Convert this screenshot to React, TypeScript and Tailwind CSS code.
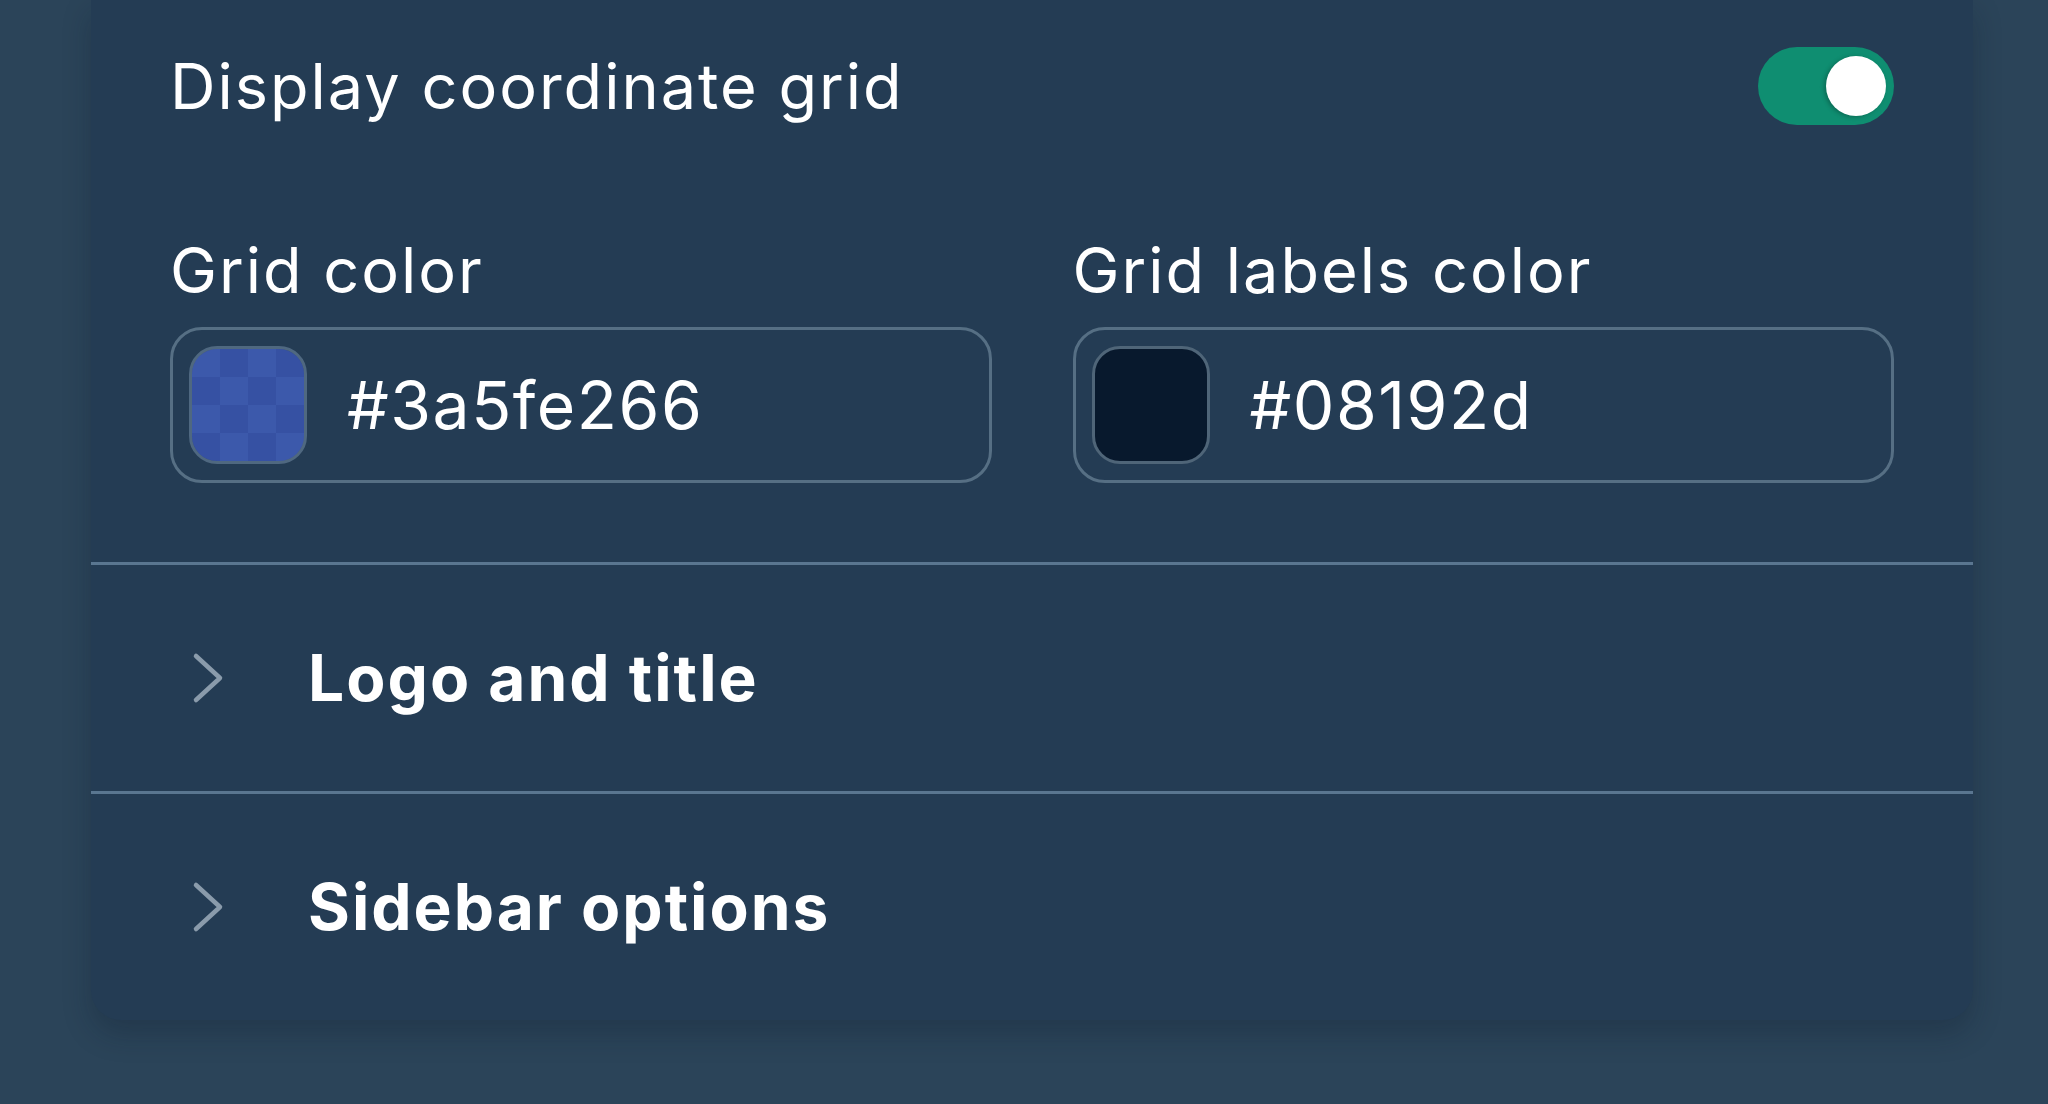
import React from 'react';

const font = { fontFamily: 'Inter, "Noto Sans", sans-serif' };

function Toggle() {
  return (
    <div className="flex h-[78px] w-[136px] items-center justify-end rounded-full bg-[#0f8e71] pr-[8px]">
      <div className="h-[60px] w-[60px] rounded-full bg-white shadow-[-2px_1px_4px_rgba(0,0,0,0.25)]" />
    </div>
  );
}

function ColorField({ label, value, swatch }: { label: string; value: string; swatch: React.ReactNode }) {
  return (
    <div className="flex flex-col">
      <div className="text-[63px] leading-[72px] tracking-[2px] text-white">{label}</div>
      <div className="mt-[21px] flex h-[156px] items-center rounded-[32px] border-[3px] border-[#566f84] pl-[16px]">
        {swatch}
        <span className="ml-[40px] text-[66px] leading-none tracking-[1.5px] text-white">{value}</span>
      </div>
    </div>
  );
}

function Chevron() {
  return (
    <svg width="34" height="54" viewBox="0 0 34 54" fill="none">
      <polyline
        points="5,5 29,27 5,49"
        stroke="#8a9bab"
        strokeWidth="4.5"
        strokeLinecap="round"
        strokeLinejoin="round"
      />
    </svg>
  );
}

function AccordionRow({ title }: { title: string }) {
  return (
    <div className="border-t-[3px] border-[#5a7690]">
      <button className="flex h-[226px] w-full items-center pl-[100px] text-left">
        <Chevron />
        <span className="ml-[83px] text-[64px] font-bold leading-none tracking-[2px] text-white">{title}</span>
      </button>
    </div>
  );
}

export default function App() {
  return (
    <div className="h-[1104px] w-full overflow-hidden bg-[#2b4459] pl-[91px]" style={font}>
      <div className="w-[1882px] rounded-b-[30px] bg-[#243c54] shadow-[0_14px_28px_rgba(10,25,40,0.25)]">
        <div className="px-[79px] pt-[47px] pb-[79px]">
          <div className="flex h-[78px] items-center justify-between">
            <span className="text-[63px] leading-none tracking-[2px] text-white">Display coordinate grid</span>
            <Toggle />
          </div>
          <div className="mt-[109px] grid grid-cols-2 gap-[81px]">
            <ColorField
              label="Grid color"
              value="#3a5fe266"
              swatch={
                <div className="h-[118px] w-[118px] shrink-0 overflow-hidden rounded-[28px] border-[3px] border-[#4f6880] bg-[conic-gradient(#34497a_25%,#3f5588_0_50%,#34497a_0_75%,#3f5588_0)] bg-[length:56px_56px]">
                  <div className="h-full w-full bg-[#3a5fe2]/40" />
                </div>
              }
            />
            <ColorField
              label="Grid labels color"
              value="#08192d"
              swatch={
                <div className="h-[118px] w-[118px] shrink-0 rounded-[28px] border-[3px] border-[#4f6578] bg-[#08192d]" />
              }
            />
          </div>
        </div>
        <AccordionRow title="Logo and title" />
        <AccordionRow title="Sidebar options" />
      </div>
    </div>
  );
}
